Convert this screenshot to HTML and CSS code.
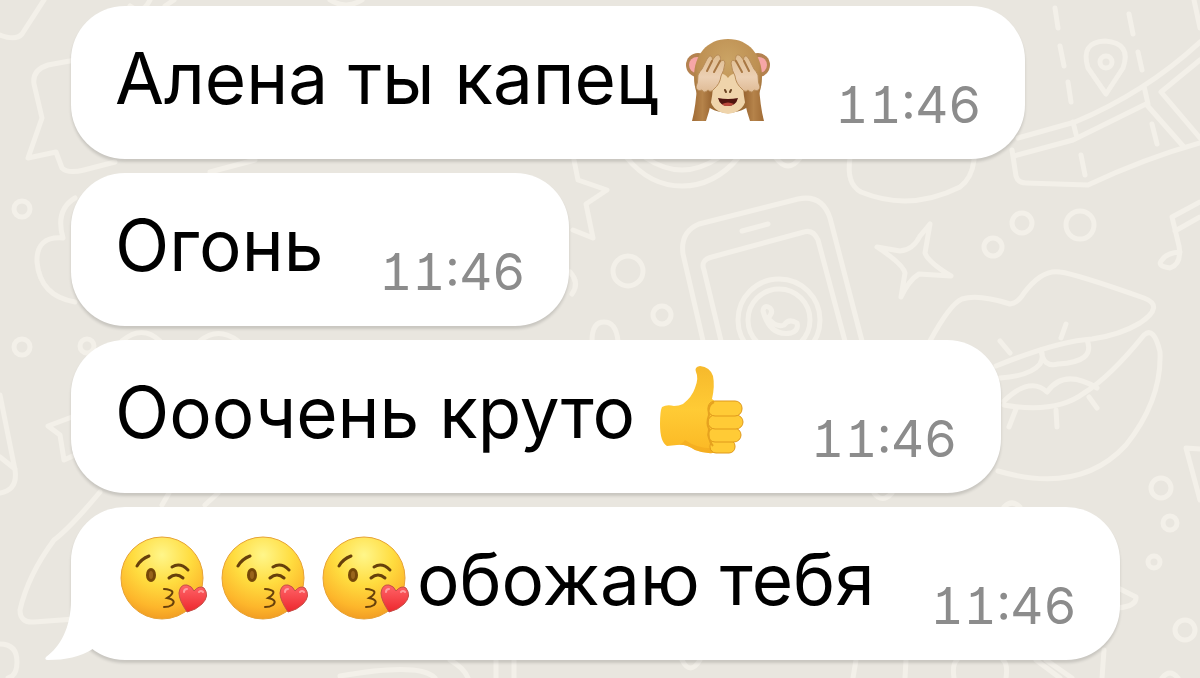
FILE: index.html
```html
<!DOCTYPE html>
<html lang="ru">
<head>
    <meta charset="UTF-8">
    <meta name="viewport" content="width=device-width, initial-scale=1.0">
    <title>Чат</title>
    <link rel="stylesheet" href="styles.css">
</head>
<body>
    <!-- Doodle wallpaper -->
    <svg class="wallpaper" viewBox="0 0 1200 678" preserveAspectRatio="xMinYMin slice" aria-hidden="true">
        <!-- left side -->
        <path d="M44 0L22 34Q16 41 0 35M75 60L48 65Q32 70 34 84L42 118L28 158L56 152L62 168Q68 174 84 170L115 162M210 172L255 160"/>
        <path d="M75 198Q55 210 63 238Q36 236 37 262Q40 296 75 302"/>
        <path d="M0 395L15 470Q18 490 0 493M0 457L15 469M72 417L48 426L60 435L64 460L75 455M100 492Q70 528 54 540Q28 575 20 610Q20 623 34 622L75 619M162 505L169 493M205 505L218 493M0 644Q17 644 17 662Q17 676 8 678"/>
        <circle cx="22" cy="209" r="8"/>
        <circle cx="22" cy="347" r="8"/>
        <circle cx="87" cy="346" r="7"/>
        <path d="M122 341Q142 324 160 341M200 341Q218 326 238 341M130 6Q142 16 150 0M165 6L174 0M330 0Q346 10 362 0"/>
        <!-- centre -->
        <path d="M574 160L578 180L607 190L586 204L593 238L573 230"/>
        <path d="M627 158Q650 186 682 186Q714 186 738 158M646 158Q682 182 718 158M776 158Q788 174 800 158"/>
        <circle cx="628" cy="271" r="15"/>
        <circle cx="662" cy="315" r="9"/>
        <path d="M592 341Q592 322 604 322Q616 322 618 341M570 272Q580 283 572 294"/>
        <path d="M704 345L683 254Q680 232 699 224L798 199Q822 194 830 218L863 345M722 345L704 270Q700 260 712 257L804 232Q813 229 818 240L846 345M742 231L768 224"/>
        <circle cx="779" cy="320" r="41"/>
        <circle cx="779" cy="320" r="31"/>
        <path d="M763 311Q764 304 770 308Q774 312 768 318Q776 328 784 325Q789 318 797 323Q799 330 791 333Q770 337 763 311Z"/>
        <!-- right side -->
        <path d="M850 158Q846 184 861 192Q910 212 960 187Q972 178 974 160"/>
        <path d="M877 247L900 251Q913 250 920 236L930 224L925 253Q928 262 951 276L919 274Q909 280 901 297L905 273Q903 264 877 247Z"/>
        <circle cx="1022" cy="223" r="10"/>
        <circle cx="993" cy="247" r="9"/>
        <circle cx="1080" cy="225" r="14"/>
        <path d="M1106 94L1088 68Q1080 42 1105 41Q1132 43 1123 68Z"/>
        <circle cx="1106" cy="62" r="6"/>
        <path d="M1018 138L1075 122Q1146 92 1200 42M1014 156L1073 140L1146 104L1183 146M1073 122L1077 138M1144 86L1148 104M1200 60L1161 92L1200 138M1012 150L1016 176Q1018 183 1026 183L1088 185Q1146 158 1200 143M1194 0L1200 28"/>
        <path d="M1055 8L1058 28M1060 46L1064 66M1068 82L1071 102M1081 155L1085 175M1129 14L1133 34M1138 52L1142 70M1152 124L1157 144"/>
        <path d="M1200 202L1172 217L1179 246Q1182 264 1170 268Q1156 266 1162 260Q1166 253 1180 252M1175 231L1200 217"/>
        <!-- lips -->
        <path d="M930 341Q950 304 962 299Q978 294 1010 304Q1018 303 1024 293Q1042 269 1060 272Q1076 274 1144 298Q1165 306 1140 323Q1120 335 1092 339Q1058 341 996 366"/>
        <path d="M1000 378Q1030 376 1040 364Q1044 357 1041 350Q1043 368 1058 364Q1096 362 1087 340M1004 401Q1030 376 1047 392Q1064 368 1097 388M1004 405Q1056 414 1084 393Q1110 377 1144 335Q1154 326 1160 352Q1162 400 1126 445Q1080 495 998 471"/>
        <path d="M1000 341L1010 353M1066 324L1061 338M1016 409L1009 427M1056 410L1057 427M1089 397L1097 408"/>
        <circle cx="1161" cy="488" r="10"/>
        <circle cx="1170" cy="523" r="7"/>
        <circle cx="1154" cy="562" r="6"/>
        <circle cx="1185" cy="630" r="10"/>
        <path d="M1200 449L1186 448L1200 500M1118 588L1136 597Q1137 606 1118 608M874 493Q882 504 892 493M1004 507Q1012 499 1020 507"/>
        <!-- bottom edge -->
        <path d="M340 676Q420 662 435 678M450 660Q464 668 468 678M496 660V678M514 660V678M682 660Q690 676 700 660M856 660L853 678M906 660L905 678M957 660Q952 664 954 678M1003 660Q1008 664 1006 678M1036 660L1060 678M1046 660L1072 678M1104 650L1102 678M1162 678Q1170 668 1178 678"/>
    </svg>

    <!-- Shared emoji shapes -->
    <svg class="sprite" aria-hidden="true">
        <defs>
            <radialGradient id="face" cx="50%" cy="22%" r="80%">
                <stop offset="0" stop-color="#fff68a"/>
                <stop offset="0.45" stop-color="#ffdc3f"/>
                <stop offset="0.8" stop-color="#fdb62b"/>
                <stop offset="1" stop-color="#f09a22"/>
            </radialGradient>
            <linearGradient id="heart" x1="0" y1="0" x2="0" y2="1">
                <stop offset="0" stop-color="#ff6468"/>
                <stop offset="1" stop-color="#ed272d"/>
            </linearGradient>
            <linearGradient id="hand" x1="0" y1="0" x2="0" y2="1">
                <stop offset="0" stop-color="#f6b92c"/>
                <stop offset="0.5" stop-color="#ffcb35"/>
                <stop offset="1" stop-color="#fbb824"/>
            </linearGradient>
            <radialGradient id="fur" cx="50%" cy="30%" r="65%">
                <stop offset="0" stop-color="#cba465"/>
                <stop offset="0.7" stop-color="#bd8f52"/>
                <stop offset="1" stop-color="#9c6c37"/>
            </radialGradient>
            <linearGradient id="arm" x1="0" y1="0" x2="1" y2="0">
                <stop offset="0" stop-color="#a06b35"/>
                <stop offset="0.5" stop-color="#b5834a"/>
                <stop offset="1" stop-color="#96622f"/>
            </linearGradient>
            <linearGradient id="palm" x1="0" y1="0" x2="0" y2="1">
                <stop offset="0" stop-color="#dfbd8f"/>
                <stop offset="0.6" stop-color="#ecd0b4"/>
                <stop offset="1" stop-color="#dfbb95"/>
            </linearGradient>
        </defs>
        <symbol id="kiss" viewBox="0 0 88 88">
            <circle cx="43" cy="43" r="41" fill="url(#face)" stroke="#e7a235" stroke-width="1"/>
            <g fill="none" stroke="#67400b" stroke-width="3" stroke-linecap="round">
                <path d="M18 31Q22 24 30 21M53 32Q61 27 69 35M50 43Q57 37 64 43"/>
                <path d="M45 54Q58 55 51 61Q48 63 48 63Q58 65 53 70Q50 72 45 72" stroke-width="2"/>
            </g>
            <ellipse cx="32" cy="40" rx="5" ry="7" fill="#754708"/>
            <ellipse cx="32" cy="40" rx="2" ry="4" fill="#99641c"/>
            <path d="M68 77Q60 65 60 58Q61 49 68 50Q73 51 75 56Q80 50 85 53Q91 61 83 69Q77 75 68 77Z" fill="url(#heart)" stroke="#c34e46" stroke-width="1"/>
            <path d="M65 57Q65 54 68 54M80 57Q82 55 84 57" fill="none" stroke="#ff9fa0" stroke-width="2" stroke-linecap="round"/>
        </symbol>
        <symbol id="thumb" viewBox="0 0 88 92">
            <path d="M3 43Q8 40 15 42Q20 42 24 40Q33 33 36 24Q40 14 37 8Q35 3 41 2Q51 3 54 12Q56 22 53 35L62 42L61 88Q48 91 36 86Q27 80 18 81L8 82Q1 78 1 60Q1 47 3 43Z" fill="url(#hand)"/>
            <path d="M26 76Q40 86 58 84L61 88Q48 91 36 86Q28 80 18 81Q24 80 26 76Z" fill="#f0a31c" opacity="0.5"/>
            <g fill="#ffcb36" stroke="#e0991b" stroke-width="1">
                <rect x="51" y="76" width="25" height="13" rx="6"/>
                <rect x="49" y="64" width="33" height="14" rx="7"/>
                <rect x="49" y="51" width="35" height="14" rx="7"/>
                <rect x="49" y="37" width="34" height="15" rx="7"/>
            </g>
            <path d="M55 38Q48 41 50 51Q47 59 50 65Q48 75 54 82" fill="none" stroke="#e6a21f" stroke-width="2"/>
        </symbol>
        <symbol id="monkey" viewBox="0 0 84 84">
            <circle cx="12" cy="27" r="12" fill="#b48250"/>
            <circle cx="72" cy="27" r="12" fill="#b48250"/>
            <circle cx="11" cy="27" r="8" fill="#f6a6a7"/>
            <circle cx="73" cy="27" r="8" fill="#f6a6a7"/>
            <path d="M42 1C63 1 76 17 76 39C76 62 62 74 42 75C22 74 8 62 8 39C8 17 21 1 42 1Z" fill="url(#fur)"/>
            <path d="M42 40Q50 30 58 44Q54 50 60 56Q61 73 42 76Q23 73 24 56Q30 50 26 44Q34 30 42 40Z" fill="#efd4ab"/>
            <path d="M32 60Q42 62 52 60Q50 68 42 68Q34 68 32 60Z" fill="#50150f"/>
            <path d="M36 66Q42 63 48 66Q46 68 42 68Q37 68 36 66Z" fill="#b8483b"/>
            <path d="M39 52L40 54M45 52L44 54" stroke="#694321" stroke-width="2" stroke-linecap="round"/>
            <g id="paw">
                <path d="M6 83Q10 68 11 46L27 48Q26 66 20 83Z" fill="url(#arm)"/>
                <path d="M12 37Q14 33 16 31L21 21Q24 16 26 19Q27 21 26 23L28 20Q31 15 34 18Q35 20 34 24Q38 20 39 25Q38 33 35 38Q34 46 28 51Q25 55 22 52Q18 56 16 52Q11 54 10 49Q12 45 12 37Z" fill="url(#palm)" stroke="#b98d5a" stroke-width="1"/>
                <path d="M26 23L21 33M34 23L28 34" fill="none" stroke="#a87743" stroke-width="2" stroke-linecap="round"/>
            </g>
            <use href="#paw" transform="matrix(-1 0 0 1 84 0)"/>
        </symbol>
    </svg>

    <main class="chat">
        <div class="message">
            <p class="text">Алена ты капец <svg class="emoji" role="img" aria-label="Обезьяна закрыла глаза"><use href="#monkey"/></svg></p>
            <time class="time" datetime="11:46">11:46</time>
        </div>
        <div class="message">
            <p class="text">Огонь</p>
            <time class="time" datetime="11:46">11:46</time>
        </div>
        <div class="message">
            <p class="text">Ооочень круто <svg class="emoji emoji-thumb" role="img" aria-label="Палец вверх"><use href="#thumb"/></svg></p>
            <time class="time" datetime="11:46">11:46</time>
        </div>
        <div class="message message-last">
            <svg class="tail" viewBox="0 0 60 60" aria-hidden="true"><path d="M26 0C26 28 15 47 1 57Q-1 60 3 60Q30 60 46 50L60 40V0Z"/></svg>
            <p class="text"><span class="kisses"><svg class="emoji" role="img" aria-label="Воздушный поцелуй"><use href="#kiss"/></svg><svg class="emoji" role="img" aria-label="Воздушный поцелуй"><use href="#kiss"/></svg><svg class="emoji" role="img" aria-label="Воздушный поцелуй"><use href="#kiss"/></svg></span>обожаю тебя</p>
            <time class="time" datetime="11:46">11:46</time>
        </div>
    </main>
</body>
</html>
```

FILE: styles.css
```css
* {
    box-sizing: border-box;
}
body {
    margin: 0;
    min-height: 100vh;
    position: relative;
    overflow-x: hidden;
    font-family: Inter, "Liberation Sans", sans-serif;
    background: #e9e6df;
}
.wallpaper {
    position: absolute;
    inset: 0;
    width: 100%;
    height: 100%;
    fill: none;
    stroke: #f3f0e9;
    stroke-width: 5;
    stroke-linecap: round;
    stroke-linejoin: round;
}
.sprite {
    position: absolute;
    width: 0;
    height: 0;
}
.chat {
    position: relative;
    display: flex;
    flex-direction: column;
    align-items: flex-start;
    gap: 14px;
    padding: 6px 71px 18px;
}
.message {
    display: flex;
    align-items: flex-end;
    gap: 56px;
    padding: 24px 44px;
    border-radius: 54px;
    background: #fff;
    box-shadow: 0 3px 3px rgba(0, 0, 0, 0.14);
}
.text {
    margin: 0;
    font-size: 71px;
    line-height: 96px;
    padding-bottom: 9px;
    color: #000;
    white-space: nowrap;
}
.time {
    font-size: 51px;
    line-height: 60px;
    font-feature-settings: "tnum", "cv01";
    color: #8c8c8c;
}
.emoji {
    width: 84px;
    height: 84px;
    margin: 0 9px 0 8px;
    vertical-align: -18px;
}
.emoji-thumb {
    width: 88px;
    height: 92px;
    margin: 0 8px 0 4px;
}
.kisses {
    display: inline-flex;
    gap: 13px;
    margin: 0 8px 0 4px;
    vertical-align: -18px;
}
.kisses .emoji {
    width: 88px;
    height: 88px;
    margin: 0;
}
.message-last {
    position: relative;
}
/* tail hangs off the bottom left corner */
.tail {
    position: absolute;
    left: -26px;
    bottom: 0;
    width: 60px;
    height: 60px;
    fill: #fff;
}
```
